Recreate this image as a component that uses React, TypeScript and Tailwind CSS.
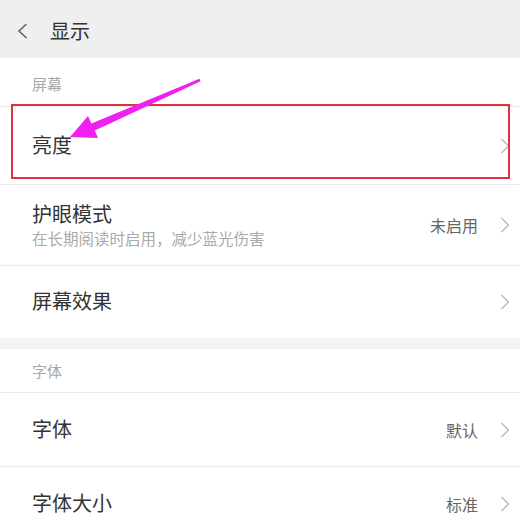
import { ReactNode } from "react"

const FONT = { fontFamily: '"Noto Sans CJK SC", "Noto Sans", sans-serif' }

function Chevron() {
  return (
    <svg width="10" height="16" viewBox="0 0 10 16" className="shrink-0">
      <path d="M1.5 1 L8.5 8 L1.5 15" fill="none" stroke="#b8b8b8" strokeWidth="1.3" />
    </svg>
  )
}

function Row({
  title,
  sub,
  value,
  height,
  divider = true,
}: {
  title: string
  sub?: string
  value?: string
  height: string
  divider?: boolean
}) {
  return (
    <div className={`flex items-center pl-8 pr-[10px] ${height} ${divider ? "border-b border-[#ececec]" : ""}`}>
      <div className="flex-1 flex flex-col -mt-[2px]">
        <div className="text-[20px] leading-[26px] text-[#333]">{title}</div>
        {sub && <div className="text-[15.5px] leading-[20px] text-[#aaa] mt-[1px]">{sub}</div>}
      </div>
      {value && <div className="text-[16px] leading-[20px] text-[#666] mr-[22px]">{value}</div>}
      <Chevron />
    </div>
  )
}

function Label({ children, pad }: { children: ReactNode; pad: string }) {
  return (
    <div className={`pl-8 border-b border-[#ececec] text-[15px] leading-[20px] text-[#a8a8a8] ${pad}`}>
      {children}
    </div>
  )
}

export default function App() {
  return (
    <div className="relative w-[520px] h-[520px] overflow-hidden bg-white" style={FONT}>
      {/* Header */}
      <div className="h-[58px] bg-[#efefef] flex items-center pl-[17px] pt-[4px]">
        <svg width="11" height="16" viewBox="0 0 11 16">
          <path d="M9.5 1 L2 8 L9.5 15" fill="none" stroke="#666" strokeWidth="1.6" />
        </svg>
        <div className="ml-[22px] text-[20px] leading-[26px] text-[#333]">显示</div>
      </div>

      <Label pad="pt-[16px] pb-[12px]">屏幕</Label>
      <Row title="亮度" height="h-[78px]" />
      <Row title="护眼模式" sub="在长期阅读时启用，减少蓝光伤害" value="未启用" height="h-[81px]" />
      <Row title="屏幕效果" height="h-[72px]" divider={false} />

      <div className="h-[11px] bg-[#f3f3f3]" />

      <Label pad="pt-[12px] pb-[11px]">字体</Label>
      <Row title="字体" value="默认" height="h-[74px]" />
      <Row title="字体大小" value="标准" height="h-[74px]" divider={false} />

      {/* annotation box */}
      <div className="absolute left-[11px] top-[104px] w-[499px] h-[75px] border-2 border-[#e0323e]" />

      {/* annotation arrow */}
      <svg className="absolute left-0 top-0" width="520" height="520" viewBox="0 0 520 520">
        <path
          d="M199.4 78.7 L200.6 81.3 L94.8 130.5 L98 138 L70 137 L88 116 L91.4 123.6 Z"
          fill="#f020f0"
        />
      </svg>
    </div>
  )
}
